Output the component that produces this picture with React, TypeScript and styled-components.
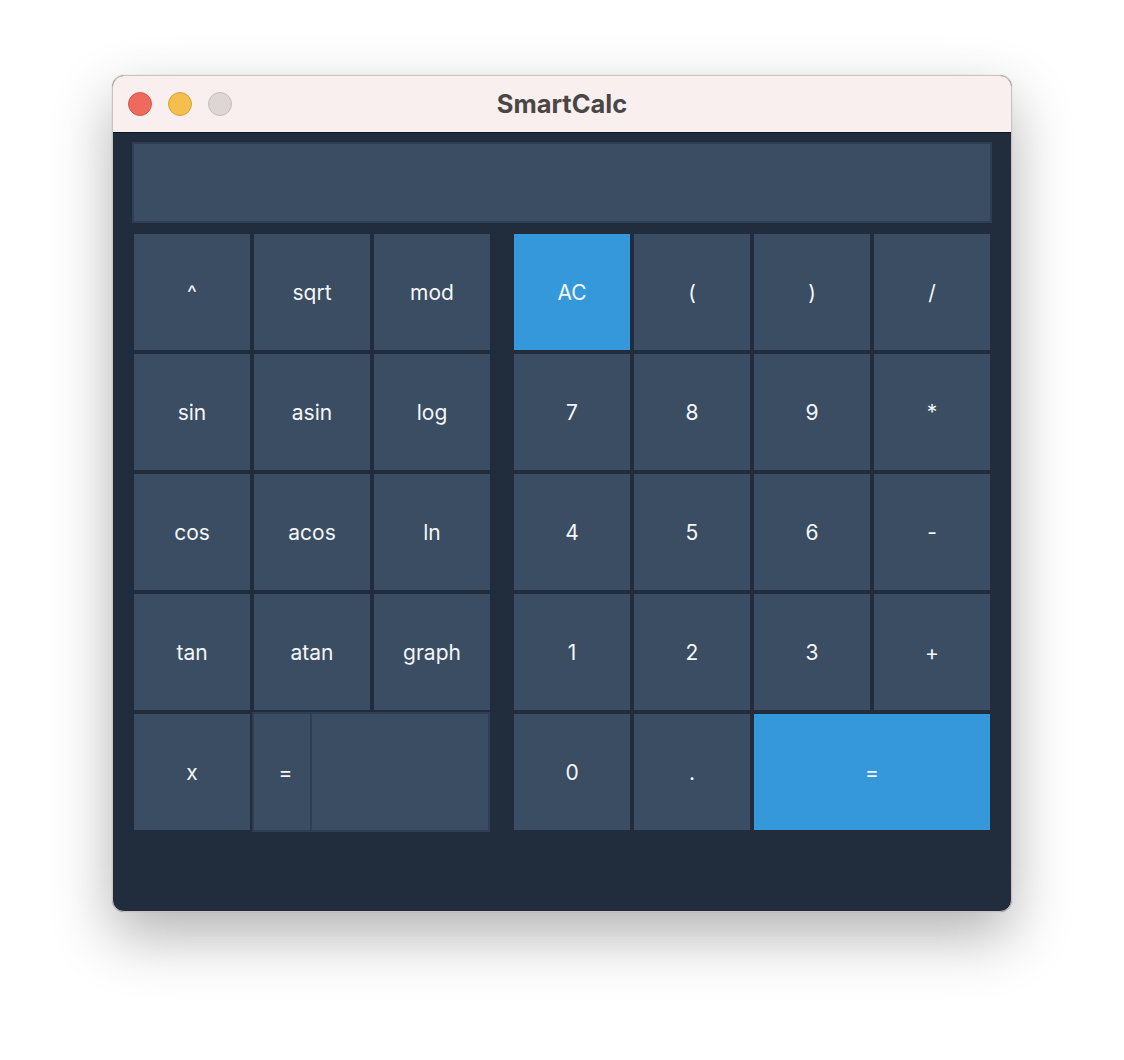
import React from "react";
import styled, { createGlobalStyle } from "styled-components";

const Global = createGlobalStyle`
  html, body { margin: 0; padding: 0; background: #ffffff; }
  body { font-family: Inter, "Liberation Sans", sans-serif; }
`;

const Page = styled.div`
  padding: 75px 0 0 112px;
  width: 1124px;
  height: 1060px;
  box-sizing: border-box;
`;

const Window = styled.div`
  width: 900px;
  height: 837px;
  box-sizing: border-box;
  border-radius: 12px;
  overflow: hidden;
  border: 1px solid #c9c3c3;
  box-shadow: 0 24px 60px rgba(0, 0, 0, 0.3), 0 0 1px rgba(0, 0, 0, 0.3);
  display: flex;
  flex-direction: column;
  background: #212c3c;
`;

const TitleBar = styled.div`
  height: 56px;
  flex: none;
  background: #f9efee;
  border-bottom: 1px solid #0f1520;
  position: relative;
  display: flex;
  align-items: center;
  justify-content: center;
`;

const Lights = styled.div`
  position: absolute;
  left: 15px;
  top: 16px;
  display: flex;
  gap: 16px;
`;

const Light = styled.span<{ $c: string; $b: string }>`
  width: 24px;
  height: 24px;
  box-sizing: border-box;
  border-radius: 50%;
  background: ${(p) => p.$c};
  border: 1px solid ${(p) => p.$b};
`;

const Title = styled.div`
  font-family: Inter, "Liberation Sans", sans-serif;
  font-weight: 700;
  font-size: 25.5px;
  color: #4a4646;
  margin-top: -2px;
`;

const Content = styled.div`
  flex: 1;
  padding: 9px 19px 0 19px;
  display: flex;
  flex-direction: column;
  gap: 11px;
`;

const Display = styled.div`
  height: 81px;
  box-sizing: border-box;
  background: #3a4d63;
  border: 2px solid #2f3e53;
`;

const Pads = styled.div`
  display: flex;
  gap: 24px;
  padding: 0 2px;
`;

const Grid = styled.div<{ $cols: number }>`
  display: grid;
  grid-template-columns: repeat(${(p) => p.$cols}, 116px);
  grid-auto-rows: 116px;
  gap: 4px;
`;

const Key = styled.div<{ $accent?: boolean; $span?: number }>`
  background: ${(p) => (p.$accent ? "#3498db" : "#3a4d63")};
  color: #f4f6f8;
  font-family: Inter, "Liberation Sans", sans-serif;
  font-size: 21px;
  padding-top: 1px;
  display: flex;
  align-items: center;
  justify-content: center;
  grid-column: span ${(p) => p.$span ?? 1};
  user-select: none;
`;

const XField = styled.div`
  grid-column: span 2;
  margin: -2px 0 -2px -2px;
  display: flex;
  border: 2px solid #2f3e53;
  background: #3a4d63;
`;

const XLabel = styled.div`
  width: 58px;
  flex: none;
  box-sizing: border-box;
  padding: 1px 0 0 7px;
  display: flex;
  align-items: center;
  justify-content: center;
  color: #f4f6f8;
  font-size: 21px;
  border-right: 2px solid #2f3e53;
`;

const XInput = styled.div`
  flex: 1;
  background: #3a4d63;
`;

const left = [
  "^", "sqrt", "mod",
  "sin", "asin", "log",
  "cos", "acos", "ln",
  "tan", "atan", "graph",
];

const right = [
  "AC", "(", ")", "/",
  "7", "8", "9", "*",
  "4", "5", "6", "-",
  "1", "2", "3", "+",
];

export default function App() {
  return (
    <Page>
      <Global />
      <Window>
        <TitleBar>
          <Lights>
            <Light $c="#ed6a5e" $b="#d6574c" />
            <Light $c="#f5bf4f" $b="#d9a23d" />
            <Light $c="#ddd6d5" $b="#c4bcbb" />
          </Lights>
          <Title>SmartCalc</Title>
        </TitleBar>
        <Content>
          <Display />
          <Pads>
            <Grid $cols={3}>
              {left.map((k) => (
                <Key key={k}>{k}</Key>
              ))}
              <Key>x</Key>
              <XField>
                <XLabel>=</XLabel>
                <XInput />
              </XField>
            </Grid>
            <Grid $cols={4}>
              {right.map((k) => (
                <Key key={k} $accent={k === "AC"}>
                  {k}
                </Key>
              ))}
              <Key>0</Key>
              <Key>.</Key>
              <Key $accent $span={2}>=</Key>
            </Grid>
          </Pads>
        </Content>
      </Window>
    </Page>
  );
}
